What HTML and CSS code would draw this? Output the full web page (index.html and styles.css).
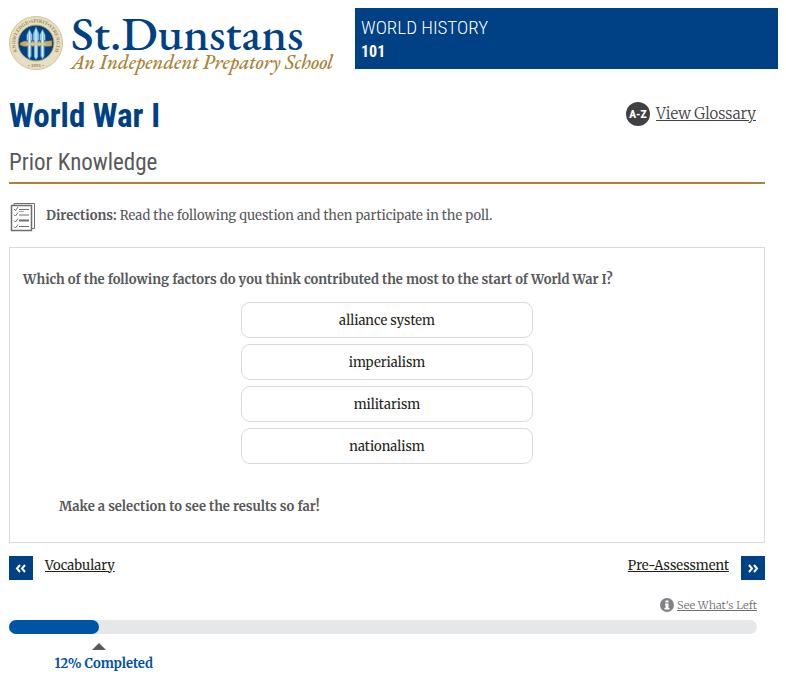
FILE: index.html
```html
<!DOCTYPE html>
<html lang="en">

<head>
    <meta charset="utf-8">
    <title>World War I - Prior Knowledge</title>
    <link rel="stylesheet" href="styles.css">
</head>

<body>
    <header class="header">
        <div class="logo">
            <svg class="seal" viewBox="0 0 108 108" aria-hidden="true">
                <defs>
                    <path id="ring" d="M21.500 79 A41 41 0 1 1 86.500 79" />
                </defs>
                <circle cx="54" cy="54" r="53" fill="#e6dfc6" stroke="#d3c48f" stroke-width="2" />
                <circle cx="54" cy="54" r="36" fill="#004084" stroke="#c2ad6c" stroke-width="2" />
                <text class="seal-text"><textPath href="#ring" startOffset="50%" text-anchor="middle">KNOWLEDGE•SPIRIT•STRENGTH</textPath></text>
                <text class="seal-text" x="54" y="102" text-anchor="middle">• 1891 •</text>
                <path d="M22 54 L30 50 H78 L86 49 V60 L78 61 H30 L22 58Z" fill="#c9a967" stroke="#745f34" />
                <g fill="#8fc7e6" stroke="#2c6598">
                    <path d="M41 26 L47 38 V49 H45 V80 L41 87 L37 80 V49 H35 V38Z" />
                    <path d="M54 21 L60 35 V49 H58 V82 L54 88 L50 82 V49 H48 V35Z" />
                    <path d="M67 26 L73 38 V49 H71 V80 L67 87 L63 80 V49 H61 V38Z" />
                </g>
                <path d="M41 31V81M54 27V83M67 31V81" stroke="#dff2fa" stroke-width="2" />
                <path d="M35 56 H73" stroke="#e0c68d" stroke-width="5" />
            </svg>
            <div class="logo-text">
                <span class="logo-name">St.Dunstans</span>
                <span class="logo-tagline">An Independent Prepatory School</span>
            </div>
        </div>
        <div class="course">
            <div class="course-name">WORLD HISTORY</div>
            <div class="course-number">101</div>
        </div>
    </header>

    <main class="content">
        <div class="title-row">
            <h1>World War I</h1>
            <a class="glossary" href="#">
                <svg class="glossary-icon" viewBox="0 0 24 24" aria-hidden="true">
                    <circle cx="12" cy="12" r="12" fill="#414042" />
                    <text x="12" y="16" text-anchor="middle">A-Z</text>
                </svg>
                <span>View Glossary</span>
            </a>
        </div>
        <h2>Prior Knowledge</h2>

        <div class="directions">
            <svg class="list-icon" viewBox="0 0 26 30" fill="none" stroke="#6d6e70" aria-hidden="true">
                <path d="M4 3.500V1.500H24.500V26.500H22" />
                <path d="M1.500 3.500H21.500V28.500H1.500Z" stroke-width="1.500" />
                <path d="M4 7l1.500 1.500L8 5M4 12.500L5.500 14L8 10.500M4 18.500L5.500 20L8 16.500M4 24.500L5.500 26L8 22.500" />
                <path d="M9 7.500H19M9 13H19M9 24.500H19" />
                <path d="M9 9.500H14" stroke="#aaa" />
                <path d="M9 18.500H19" stroke-width="2" />
            </svg>
            <p><strong>Directions:</strong> Read the following question and then participate in the poll.</p>
        </div>

        <section class="poll">
            <p class="question">Which of the following factors do you think contributed the most to the start of World War I?</p>
            <div class="answers">
                <button type="button">alliance system</button>
                <button type="button">imperialism</button>
                <button type="button">militarism</button>
                <button type="button">nationalism</button>
            </div>
            <p class="results">Make a selection to see the results so far!</p>
        </section>

        <nav class="pager">
            <a class="page-link" href="#">
                <svg class="arrow" viewBox="0 0 24 24" aria-hidden="true">
                    <path d="M11 9L8 12.500L11 16M16 9L13 12.500L16 16" />
                </svg>
                <span>Vocabulary</span>
            </a>
            <a class="page-link" href="#">
                <span>Pre-Assessment</span>
                <svg class="arrow" viewBox="0 0 24 24" aria-hidden="true">
                    <path d="M8 9L11 12.500L8 16M13 9L16 12.500L13 16" />
                </svg>
            </a>
        </nav>

        <div class="progress">
            <a class="whats-left" href="#">
                <svg class="info-icon" viewBox="0 0 14 14" aria-hidden="true">
                    <circle cx="7" cy="7" r="7" fill="#808285" />
                    <path d="M5.500 2.500H8.500V4.500H5.500ZM5 5.500H8.500V10H9.500V11.500H4.500V10H5.500V7H5Z" fill="#fff" />
                </svg>
                <span>See What's Left</span>
            </a>
            <div class="track">
                <div class="fill" style="width: 12%"></div>
            </div>
            <div class="status">
                <svg class="pointer" viewBox="0 0 14 7" aria-hidden="true">
                    <path d="M0 7L7 0L14 7Z" fill="#58595b" />
                </svg>
                <div class="percent">12% Completed</div>
            </div>
        </div>
    </main>
</body>

</html>
```
FILE: styles.css
```css
body {
    margin: 8px;
    font-family: "Merriweather", "Liberation Serif", serif;
    font-size: 13px;
    line-height: 20px;
    color: #58595b;
    background-color: #fff;
}

h1,
h2,
p {
    margin: 0;
}

.header {
    display: flex;
    gap: 22px;
    height: 68px;
    align-items: flex-start;
}

.logo {
    display: flex;
    gap: 8px;
    padding-top: 8px;
    flex-shrink: 0;
}

.seal {
    width: 54px;
    height: 54px;
    margin-left: 1px;
}

.seal-text {
    font-family: "Liberation Serif", serif;
    font-size: 10px;
    font-weight: bold;
    fill: #a08a4b;
}

.logo-text {
    display: flex;
    flex-direction: column;
    white-space: nowrap;
    width: 262px;
}

.logo-name {
    font-family: "EB Garamond", "Liberation Serif", serif;
    font-size: 48px;
    font-weight: 500;
    line-height: 34px;
    color: #004185;
}

.logo-tagline {
    font-family: "EB Garamond", "Liberation Serif", serif;
    font-size: 20px;
    font-style: italic;
    font-weight: 500;
    line-height: 24px;
    color: #a88436;
}

.course {
    flex: 1;
    padding: 8px 6px 5px;
    font-family: "Roboto Condensed", "Liberation Sans Narrow", Roboto, sans-serif;
    line-height: 24px;
    color: #fff;
    background-color: #004185;
}

.course-name {
    font-size: 19px;
    font-weight: 300;
}

.course-number {
    font-size: 16px;
    font-weight: bold;
}

.content {
    margin: 20px 13px 0 1px;
}

.title-row {
    display: flex;
    justify-content: space-between;
    align-items: flex-start;
}

h1 {
    font-family: "Roboto Condensed", "Liberation Sans Narrow", Roboto, sans-serif;
    font-size: 33px;
    line-height: 40px;
    color: #004185;
}

.glossary {
    display: flex;
    align-items: center;
    gap: 6px;
    margin: 6px 9px 0 0;
    font-size: 15px;
    font-weight: 300;
    line-height: 24px;
    color: #414042;
}

.glossary-icon {
    width: 24px;
    height: 24px;
}

.glossary-icon text {
    font-family: Roboto, sans-serif;
    font-size: 10px;
    font-weight: 900;
    fill: #fff;
}

h2 {
    padding: 12px 0 4px;
    font-family: "Roboto Condensed", "Liberation Sans Narrow", Roboto, sans-serif;
    font-size: 23px;
    font-weight: normal;
    line-height: 30px;
    border-bottom: 2px solid #a88436;
}

.directions {
    display: flex;
    gap: 10px;
    padding: 18px 0 15px 1px;
}

.directions p {
    padding-top: 4px;
}

.list-icon {
    width: 26px;
    height: 30px;
    flex-shrink: 0;
}

.poll {
    padding: 22px 13px 25px;
    border: 1px solid #d9dadb;
}

.question,
.results {
    font-weight: bold;
}

.answers {
    display: flex;
    flex-direction: column;
    gap: 6px;
    width: 40%;
    margin: 12px auto 33px;
}

.answers button {
    height: 36px;
    padding: 0;
    font-family: inherit;
    font-size: 13px;
    color: #231f20;
    background-color: #fff;
    border: 1px solid #d9dadb;
    border-radius: 9px;
    cursor: pointer;
}

.answers button:hover {
    background-color: #f1f2f2;
}

.results {
    padding-left: 36px;
}

.pager {
    display: flex;
    justify-content: space-between;
    margin-top: 13px;
}

.page-link {
    display: flex;
    gap: 12px;
    color: #231f20;
}

.arrow {
    width: 24px;
    height: 24px;
    background-color: #004185;
}

.arrow path {
    fill: none;
    stroke: #fff;
    stroke-width: 2;
}

.progress {
    display: flex;
    flex-direction: column;
    margin: 18px 8px 0 0;
}

.whats-left {
    display: flex;
    align-items: center;
    align-self: flex-end;
    gap: 3px;
    font-size: 11px;
    font-weight: 300;
    line-height: 14px;
    color: #6d6e70;
}

.info-icon {
    width: 14px;
    height: 14px;
}

.track {
    height: 14px;
    margin-top: 8px;
    background-color: #e6e7e8;
    border-radius: 7px;
}

.fill {
    height: 14px;
    background-color: #0054a6;
    border-radius: 7px;
}

.status {
    width: 24%;
    padding-top: 9px;
    text-align: center;
}

.pointer {
    display: block;
    width: 14px;
    height: 7px;
    margin: 0 auto;
}

.percent {
    margin-top: 4px;
    padding-left: 10px;
    font-weight: bold;
    color: #0054a6;
}
```
